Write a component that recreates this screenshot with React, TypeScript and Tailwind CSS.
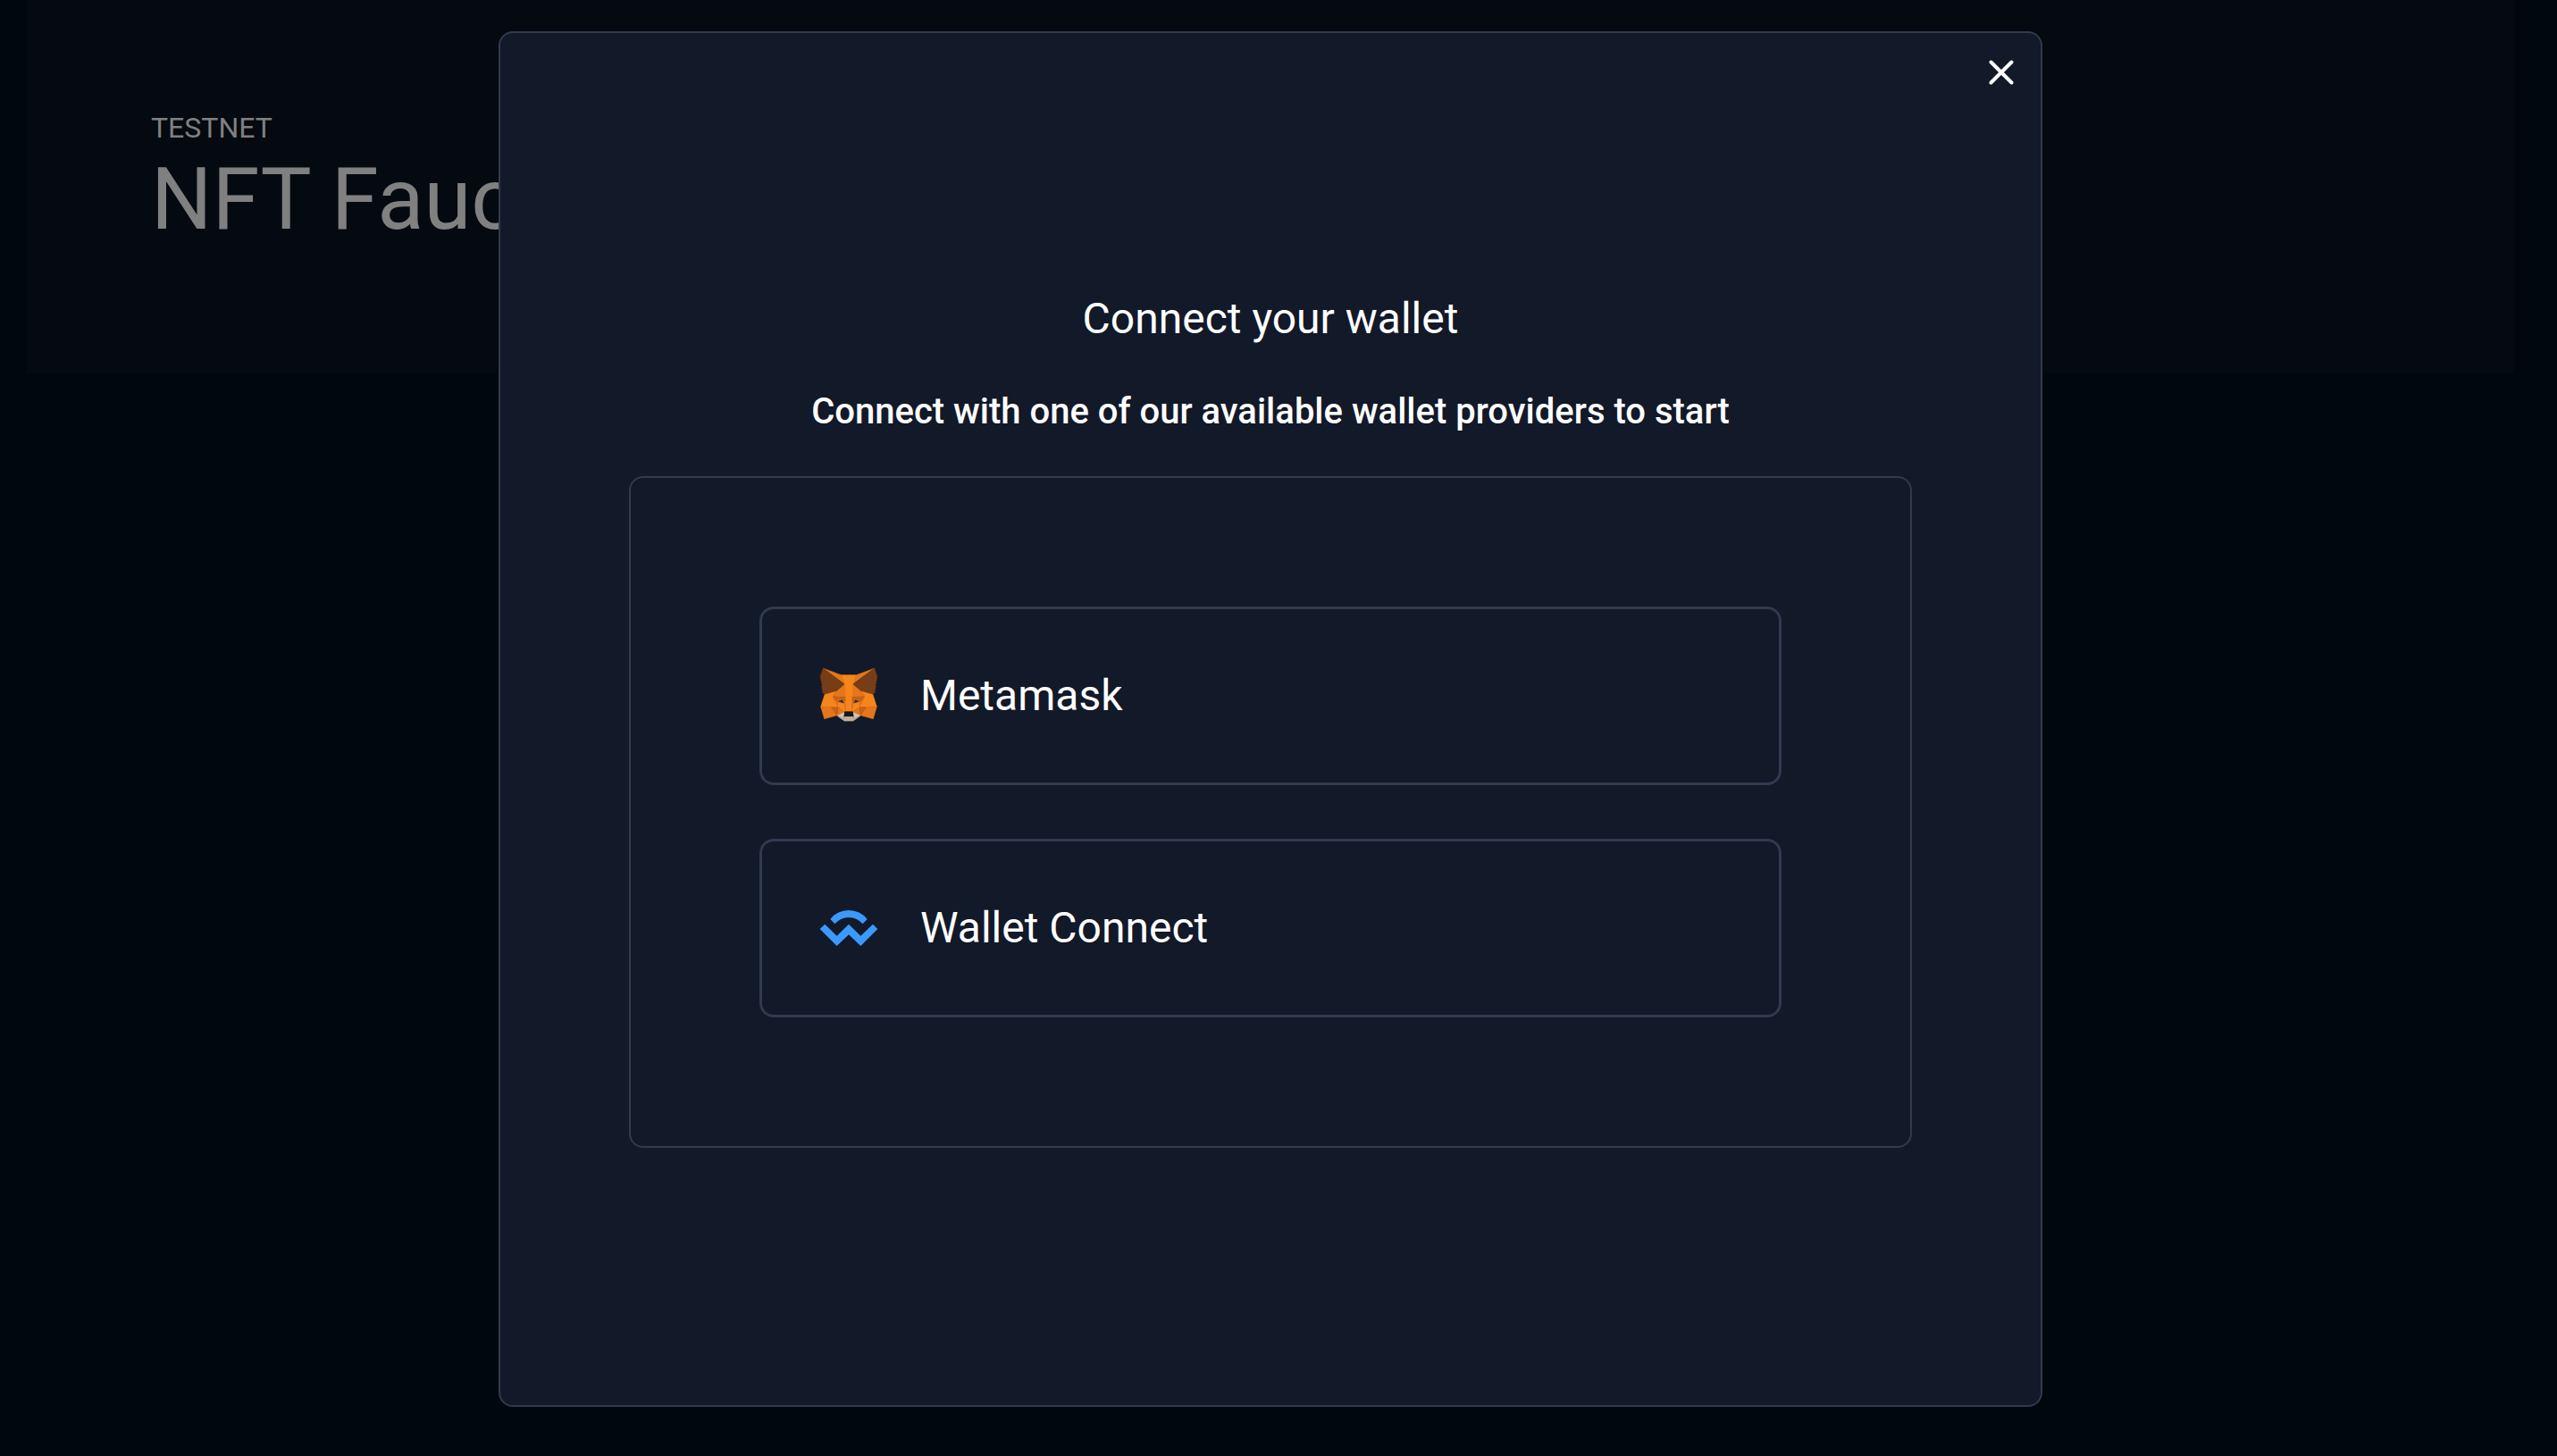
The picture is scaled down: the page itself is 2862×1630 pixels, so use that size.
import type { ReactNode } from "react";

const foxShapes: [string, string][] = [
  ["#e2761b", "274.1,35.5 174.6,109.4 193,65.8"],
  ["#e4761b", "44.4,35.5 143.1,110.1 125.6,65.8"],
  ["#e4761b", "238.3,206.8 211.8,247.4 268.5,263 284.8,207.7"],
  ["#e4761b", "33.9,207.7 50.1,263 106.8,247.4 80.3,206.8"],
  ["#e4761b", "103.6,138.2 87.8,162.1 144.1,164.6 142.1,104.1"],
  ["#e4761b", "214.9,138.2 175.9,103.4 174.6,164.6 230.8,162.1"],
  ["#e4761b", "106.8,247.4 140.6,230.9 111.4,208.1"],
  ["#e4761b", "177.9,230.9 211.8,247.4 207.1,208.1"],
  ["#d7c1b3", "211.8,247.4 177.9,230.9 180.6,253 180.3,262.3"],
  ["#d7c1b3", "106.8,247.4 138.3,262.3 138.1,253 140.6,230.9"],
  ["#233447", "138.8,193.5 110.6,185.2 130.5,176.1"],
  ["#233447", "179.7,193.5 188,176.1 208,185.2"],
  ["#cd6116", "106.8,247.4 111.6,206.8 80.3,207.7"],
  ["#cd6116", "207,206.8 211.8,247.4 238.3,207.7"],
  ["#cd6116", "230.8,162.1 174.6,164.6 179.8,193.5 188.1,176.1 208.1,185.2"],
  ["#cd6116", "110.6,185.2 130.6,176.1 138.8,193.5 144.1,164.6 87.8,162.1"],
  ["#e4751f", "87.8,162.1 111.4,208.1 110.6,185.2"],
  ["#e4751f", "208.1,185.2 207.1,208.1 230.8,162.1"],
  ["#e4751f", "144.1,164.6 138.8,193.5 145.4,227.6 146.9,182.7"],
  ["#e4751f", "174.6,164.6 171.9,182.6 173.1,227.6 179.8,193.5"],
  ["#f6851b", "179.8,193.5 173.1,227.6 177.9,230.9 207.1,208.1 208.1,185.2"],
  ["#f6851b", "110.6,185.2 111.4,208.1 140.6,230.9 145.4,227.6 138.8,193.5"],
  ["#c0ad9e", "180.3,262.3 180.6,253 178.1,250.8 140.4,250.8 138.1,253 138.3,262.3 106.8,247.4 117.8,256.4 140.1,271.9 178.4,271.9 200.8,256.4 211.8,247.4"],
  ["#161616", "177.9,230.9 173.1,227.6 145.4,227.6 140.6,230.9 138.1,253 140.4,250.8 178.1,250.8 180.6,253"],
  ["#763d16", "278.3,114.2 286.8,73.4 274.1,35.5 177.9,106.9 214.9,138.2 267.2,153.5 278.8,140 273.8,136.4 281.8,129.1 275.6,124.3 283.6,118.2"],
  ["#763d16", "31.8,73.4 40.3,114.2 34.9,118.2 42.9,124.3 36.8,129.1 44.8,136.4 39.8,140 51.3,153.5 103.6,138.2 140.6,106.9 44.4,35.5"],
  ["#f6851b", "267.2,153.5 214.9,138.2 230.8,162.1 207.1,208.1 238.3,207.7 284.8,207.7"],
  ["#f6851b", "103.6,138.2 51.3,153.5 33.9,207.7 80.3,207.7 111.4,208.1 87.8,162.1"],
  ["#f6851b", "174.6,164.6 177.9,106.9 193.1,65.8 125.6,65.8 140.6,106.9 144.1,164.6 145.3,182.8 145.4,227.6 173.1,227.6 173.3,182.8"],
];

function MetamaskIcon() {
  return (
    <svg viewBox="0 0 318.6 318.6" className="size-20 shrink-0" aria-hidden="true">
      {foxShapes.map(([color, points]) => (
        <polygon key={points} fill={color} stroke={color} strokeLinejoin="round" points={points} />
      ))}
    </svg>
  );
}

function WalletConnectIcon() {
  return (
    <svg viewBox="30 -3 240 240" className="size-20 shrink-0" fill="#3b99fc" aria-hidden="true">
      <path d="M88 87A79 79 0 0 1 212 87L197 103A61 61 0 0 0 103 103Z" />
      <path d="M53 120L70 104L110 143L150 104L190 143L231 104L247 120L190 177L150 139L110 177Z" />
    </svg>
  );
}

function WalletButton({ icon, label }: { icon: ReactNode; label: string }) {
  return (
    <button
      type="button"
      className="flex min-h-[200px] w-full items-center gap-10 rounded-2xl border-3 border-[#2f3b4f] px-[57px] text-left text-5xl leading-16"
    >
      {icon}
      <span>{label}</span>
    </button>
  );
}

export default function App() {
  return (
    <div className="min-h-screen bg-[#00080e] font-['Roboto',sans-serif] text-white">
      <header className="mr-12 ml-[30px] bg-[#050910] px-[139px] pt-[119px] pb-[139px] text-[#808080]">
        <p className="text-[32px] leading-12">TESTNET</p>
        <h1 className="text-8xl leading-28">NFT Faucet</h1>
      </header>

      <div className="fixed inset-0 flex items-center justify-center pr-[18px] pb-5">
        <section
          role="dialog"
          aria-modal="true"
          aria-labelledby="wallet-title"
          className="relative w-full max-w-[1728px] rounded-2xl border-2 border-[#2f3b4f] bg-[#121929] px-36 py-72"
        >
          <button
            type="button"
            aria-label="Close"
            className="absolute top-5 right-5 flex size-12 items-center justify-center"
          >
            <svg viewBox="0 0 28 28" className="size-7" stroke="#fff" strokeWidth="4" strokeLinecap="round" aria-hidden="true">
              <path d="M2.5 2.5L25.5 25.5M25.5 2.5L2.5 25.5" />
            </svg>
          </button>

          <div className="flex flex-col gap-10">
            <h2 id="wallet-title" className="text-center text-5xl leading-16">
              Connect your wallet
            </h2>
            <p className="text-center text-[40px] leading-16 font-medium">
              Connect with one of our available wallet providers to start
            </p>
            <div className="flex flex-col gap-15 rounded-2xl border-2 border-[#2f3b4f] p-36">
              <WalletButton icon={<MetamaskIcon />} label="Metamask" />
              <WalletButton icon={<WalletConnectIcon />} label="Wallet Connect" />
            </div>
          </div>
        </section>
      </div>
    </div>
  );
}
